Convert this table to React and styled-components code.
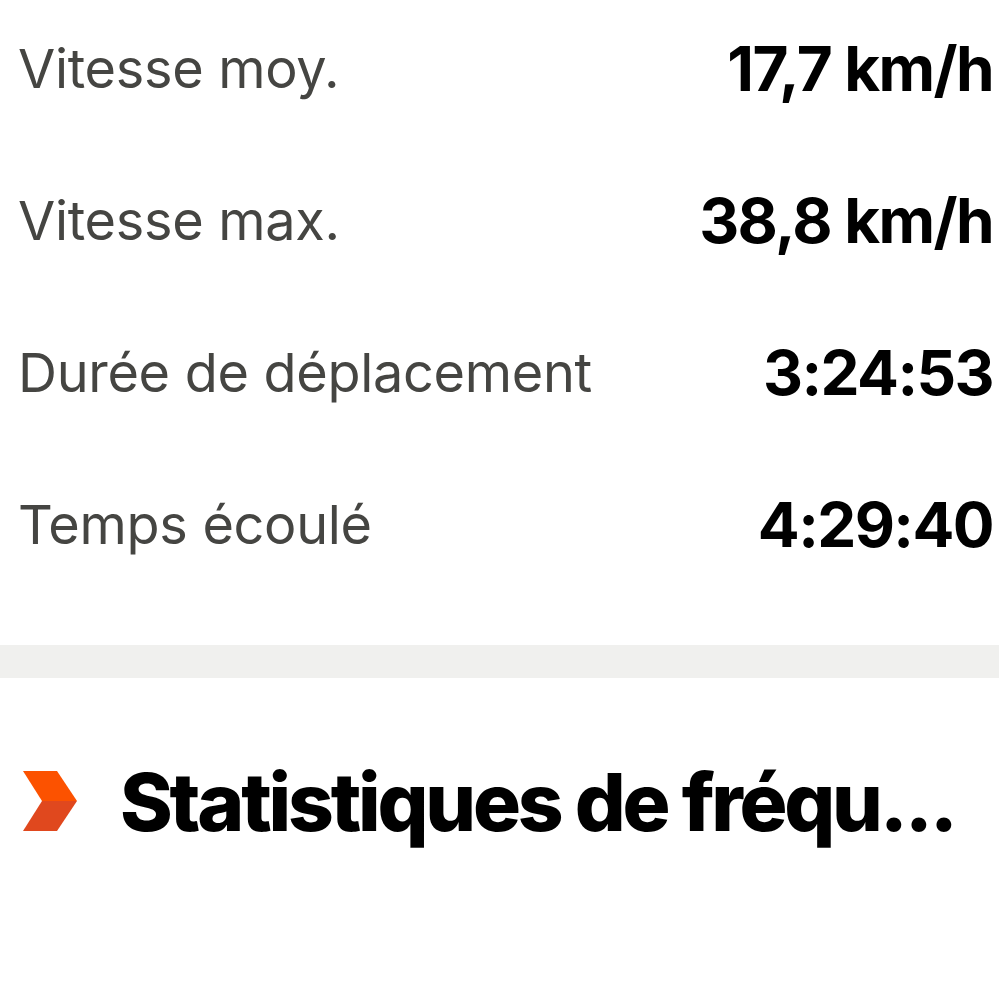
import styled, { createGlobalStyle } from "styled-components";

const GlobalStyle = createGlobalStyle`
    html, body {
        margin: 0;
        padding: 0;
        background: #FFFFFF;
    }
    body {
        font-family: Inter, "Liberation Sans", sans-serif;
        overflow: hidden;
    }
`;

const Page = styled.div`
    width: 999px;
    height: 999px;
    overflow: hidden;
    background: #FFFFFF;
`;

const StatsList = styled.div`
    display: flex;
    flex-direction: column;
    margin-top: -8px;
    padding: 0 6px 45px 18px;
`;

const StatRow = styled.div`
    height: 152px;
    display: flex;
    align-items: center;
    justify-content: space-between;
`;

const Label = styled.span`
    color: #454542;
    font-size: 54px;
    font-weight: 400;
    letter-spacing: -0.3px;
`;

const Value = styled.span`
    color: #000000;
    font-size: 62px;
    font-weight: 700;
    letter-spacing: -1.6px;
`;

const Divider = styled.div`
    height: 33px;
    background: #F0F0EE;
`;

const SectionHeader = styled.div`
    height: 246px;
    display: flex;
    align-items: center;
    gap: 43px;
    padding: 0 20px 0 23px;
`;

const ChevronBox = styled.div`
    flex: none;
    width: 54px;
    height: 60px;
    svg {
        display: block;
    }
`;

const SectionTitle = styled.h2`
    margin: 0;
    min-width: 0;
    color: #000000;
    font-size: 80px;
    font-weight: 800;
    letter-spacing: -3.2px;
    white-space: nowrap;
    font-feature-settings: "calt" 0;
`;

const Chevron = () => (
    <svg width="54" height="60" viewBox="0 0 54 60">
        <polygon points="0,0 34,0 54,30 19,30" fill="#FC5200" />
        <polygon points="19,30 54,30 34,60 0,60" fill="#E0481E" />
    </svg>
);

const stats = [
    { label: "Vitesse moy.", value: "17,7 km/h" },
    { label: "Vitesse max.", value: "38,8 km/h" },
    { label: "Durée de déplacement", value: "3:24:53" },
    { label: "Temps écoulé", value: "4:29:40" },
];

export default function App() {
    return (
        <Page>
            <GlobalStyle />
            <StatsList>
                {stats.map((s) => (
                    <StatRow key={s.label}>
                        <Label>{s.label}</Label>
                        <Value>{s.value}</Value>
                    </StatRow>
                ))}
            </StatsList>
            <Divider />
            <SectionHeader>
                <ChevronBox>
                    <Chevron />
                </ChevronBox>
                <SectionTitle>Statistiques de fréqu...</SectionTitle>
            </SectionHeader>
        </Page>
    );
}
